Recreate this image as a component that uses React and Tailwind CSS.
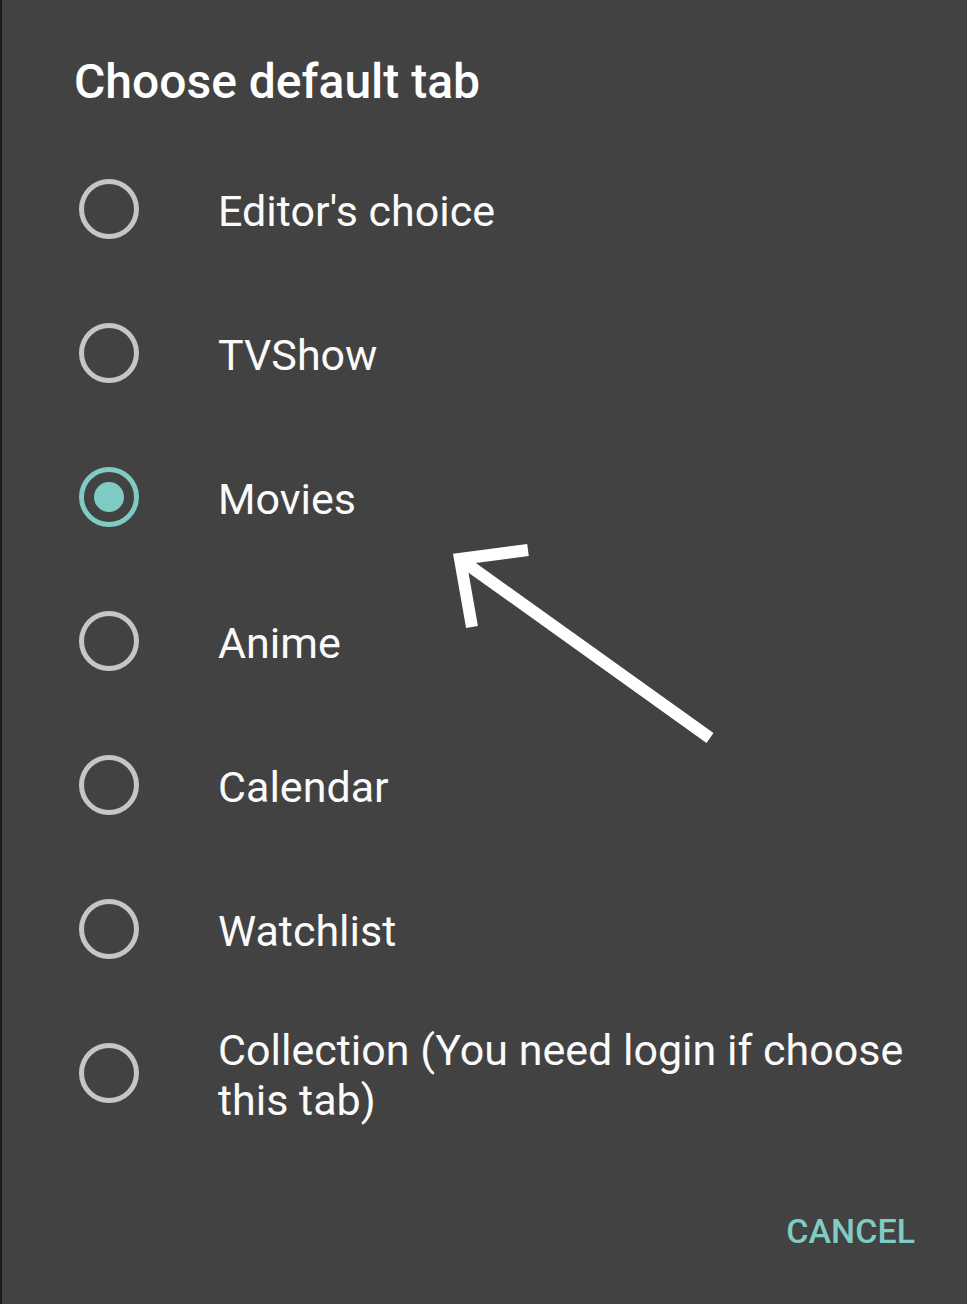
import React from "react";

const options = [
  "Editor's choice",
  "TVShow",
  "Movies",
  "Anime",
  "Calendar",
  "Watchlist",
  "Collection (You need login if choose this tab)",
];

const Radio = ({ checked }) => (
  <div
    className={`w-[60px] h-[60px] shrink-0 rounded-full border-[5px] flex items-center justify-center ${
      checked ? "border-[#80cbc4]" : "border-[#c6c6c6]"
    }`}
  >
    {checked && <div className="w-[30px] h-[30px] rounded-full bg-[#80cbc4]" />}
  </div>
);

const App = () => {
  const [selected, setSelected] = React.useState(2);

  return (
    <div
      className="relative w-[967px] h-[1304px] bg-[#424242] border-l-2 border-[#1c1c1c] text-white"
      style={{ fontFamily: "Roboto, 'Noto Sans', sans-serif" }}
    >
      <h1 className="pt-[52px] pl-[72px] h-[137px] text-[48px] font-medium leading-[60px]">
        Choose default tab
      </h1>

      <ul className="flex flex-col">
        {options.map((label, i) => (
          <li
            key={label}
            onClick={() => setSelected(i)}
            className="h-[144px] flex items-center pl-[77px] pr-[40px] cursor-pointer"
          >
            <Radio checked={selected === i} />
            <span className="ml-[79px] pt-[3px] text-[43px] leading-[50px] text-[#fafafa]">
              {label}
            </span>
          </li>
        ))}
      </ul>

      <div className="flex justify-end pr-[52px] pt-[62px]">
        <button className="text-[34px] font-medium leading-[48px] text-[#80cbc4]">
          CANCEL
        </button>
      </div>

      {/* hand-drawn annotation arrow */}
      <svg
        className="absolute left-0 top-0 pointer-events-none"
        width="967"
        height="1304"
        viewBox="0 0 967 1304"
      >
        <g stroke="#ffffff" strokeWidth="12" fill="none" strokeLinecap="butt">
          <line x1="708" y1="738" x2="462" y2="562" />
          <polyline points="526,550 458,559 470,627" strokeLinejoin="miter" />
        </g>
      </svg>
    </div>
  );
};

export default App;
